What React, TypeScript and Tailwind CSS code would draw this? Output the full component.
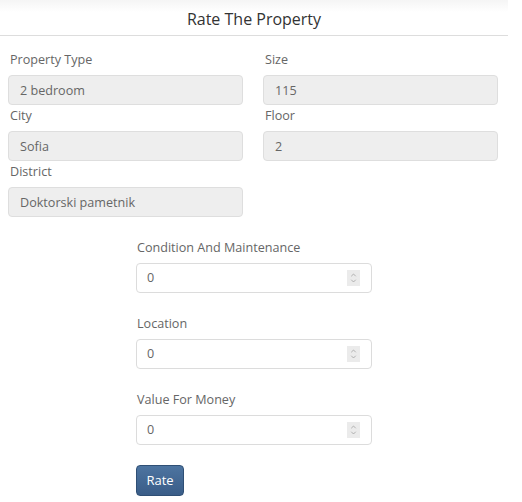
import { ChevronUp, ChevronDown } from "lucide-react";

const details = [
  [
    { label: "Property Type", value: "2 bedroom" },
    { label: "Size", value: "115" },
  ],
  [
    { label: "City", value: "Sofia" },
    { label: "Floor", value: "2" },
  ],
  [{ label: "District", value: "Doktorski pametnik" }],
];

const ratings = ["Condition And Maintenance", "Location", "Value For Money"];

const ReadOnlyField = ({ label, value }: { label: string; value: string }) => (
  <div>
    <div className="h-5 leading-[22px] pl-[2px] text-[12.6px] text-[#666]">{label}</div>
    <div className="mt-[6px] h-[30px] rounded border border-[#dedede] bg-[#eeeeee] px-[11px] leading-[29px] text-[12.6px] text-[#666]">
      {value}
    </div>
  </div>
);

const NumberField = ({ label }: { label: string }) => (
  <div>
    <div className="h-5 leading-[22px] pl-[1px] text-[12.6px] text-[#666]">{label}</div>
    <div className="mt-[6px] flex h-[30px] items-center justify-between rounded border border-[#dcdcdc] bg-white pl-[10px] pr-[11px] text-[12.6px] text-[#666]">
      <span className="pt-[1px]">0</span>
      <span className="flex h-[16px] w-[13px] flex-col items-center justify-center bg-[#ebebeb] text-[#8a8a8a]">
        <ChevronUp className="-mb-[1px] h-[8px] w-[9px]" strokeWidth={1.8} />
        <ChevronDown className="-mt-[1px] h-[8px] w-[9px]" strokeWidth={1.8} />
      </span>
    </div>
  </div>
);

export default function App() {
  return (
    <div className="min-h-[502px] w-[522px] bg-white font-['Open_Sans',sans-serif]">
      <div className="w-[508px]">
        {/* Header */}
        <div className="h-[36px] border-b border-[#dddddd] bg-gradient-to-b from-[#f5f5f5] to-white to-[12px] text-center leading-[38px] text-[16px] text-[#333]">
          Rate The Property
        </div>

        {/* Property details */}
        <div className="pl-[8px] pr-[10px] pt-[13px]">
          {details.map((row, i) => (
            <div key={i} className="grid grid-cols-2 gap-x-[20px]">
              {row.map((f) => (
                <ReadOnlyField key={f.label} label={f.label} value={f.value} />
              ))}
            </div>
          ))}
        </div>

        {/* Ratings */}
        <div className="mx-auto mt-[20px] w-[236px] space-y-[20px]">
          {ratings.map((r) => (
            <NumberField key={r} label={r} />
          ))}
          <button className="h-[31px] w-[48px] rounded border border-[#2f4f75] bg-gradient-to-b from-[#4d74a0] to-[#3a5d88] text-[13px] text-white">
            Rate
          </button>
        </div>
      </div>
    </div>
  );
}
